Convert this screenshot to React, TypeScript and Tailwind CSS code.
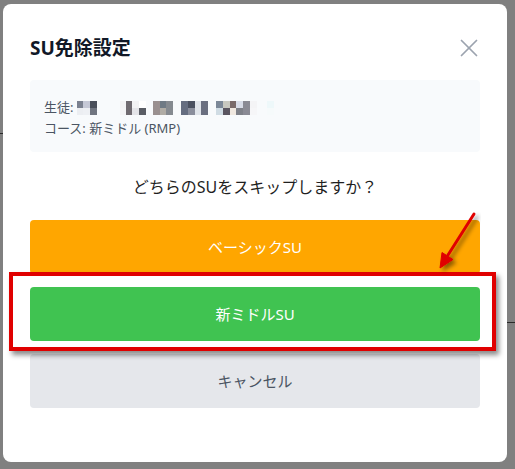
import { X } from 'lucide-react';

// pixelated (mosaic) student name: each column has a top and bottom cell
const mosaic: [number, string, string][] = [
    [84, '#7b8190', '#eceef2'],
    [90, '#c5c8d6', '#eef0f4'],
    [97, '#4a4f5a', '#707580'],
    [127, '#f2f2f4', '#f4f4f6'],
    [133, '#6f6a70', '#6f6a70'],
    [139, '#f2f2f4', '#e4e4e8'],
    [146, '#ffffff', '#5a5d65'],
    [160, '#9a9090', '#9a9090'],
    [167, '#6f7a85', '#b0aca5'],
    [173, '#858a90', '#858a90'],
    [188, '#656d80', '#656d80'],
    [195, '#4a5060', '#8a8e9c'],
    [202, '#e0e4ea', '#e0e4ea'],
    [208, '#6a6f80', '#6a6f80'],
    [223, '#7c8898', '#d0dce4'],
    [230, '#c8c8c0', '#5a5560'],
    [237, '#7a6a6a', '#f0e8e0'],
    [243, '#d8dce8', '#7e8088'],
    [250, '#8a8a94', '#8a8a94'],
    [257, '#f4f4f6', '#f6f6f8'],
    [274, '#eef8fa', '#f6fafb'],
];

const Mosaic = () => (
    <span className="relative inline-block w-[196px] h-[14px] ml-[6px]">
        {mosaic.map(([x, top, bottom]) => (
            <span key={x} className="absolute top-0 w-[7px] h-[14px] flex flex-col" style={{ left: x - 86 }}>
                <span className="h-[7px]" style={{ background: top }} />
                <span className="h-[7px]" style={{ background: bottom }} />
            </span>
        ))}
    </span>
);

export default function App() {
    return (
        <div
            className="relative w-[515px] h-[469px] bg-[#808080] overflow-hidden"
            style={{ fontFamily: '"Noto Sans", "Noto Sans CJK JP", sans-serif' }}
        >
            {/* page content behind the overlay */}
            <div className="absolute left-0 top-[133px] w-[4px] h-px bg-[#2a2a2a]" />
            <div className="absolute right-0 top-[322px] w-[9px] h-px bg-[#2a2a2a]" />

            {/* Modal */}
            <div className="relative ml-[3px] mt-[4px] w-[504px] h-[458px] bg-white rounded-lg px-[27px] pt-[30px] flex flex-col">
                <div className="h-[28px] flex items-center justify-between">
                    <h2 className="text-[19px] font-bold text-[#111827] leading-[28px]">SU免除設定</h2>
                    <X size={30} strokeWidth={1.4} className="text-[#9ca3af] -mr-[4px]" />
                </div>

                <div className="mt-[18px] h-[72px] rounded bg-[#f8fafc] px-[14px] pt-[17px] pb-[13px] text-[13px] leading-[21px] text-[#4b5563]">
                    <div className="flex items-center">
                        生徒:
                        <Mosaic />
                    </div>
                    <div>コース: 新ミドル (RMP)</div>
                </div>

                <p className="mt-[21px] text-center text-[16px] leading-[28px] text-[#1f1f1f]">
                    どちらのSUをスキップしますか？
                </p>

                <div className="mt-[19px] flex flex-col gap-[13px]">
                    <button className="h-[54px] rounded bg-[#ffa600] text-white text-[15px]">ベーシックSU</button>
                    <button className="h-[54px] rounded bg-[#40c351] text-white text-[15px]">新ミドルSU</button>
                    <button className="h-[54px] rounded bg-[#e5e7eb] text-[#4b5563] text-[15px]">キャンセル</button>
                </div>
            </div>

            {/* Annotation: red frame and arrow */}
            <div className="absolute left-[9px] top-[272px] w-[487px] h-[79px] border-4 border-[#e00000] shadow-[3px_4px_5px_rgba(0,0,0,0.45)]" />
            <svg className="absolute inset-0 pointer-events-none" width="515" height="469" viewBox="0 0 515 469">
                <defs>
                    <filter id="sh" x="-20%" y="-20%" width="140%" height="140%">
                        <feDropShadow dx="3" dy="3" stdDeviation="2" floodColor="#000" floodOpacity="0.45" />
                    </filter>
                </defs>
                <g filter="url(#sh)" fill="#e00000" stroke="#e00000">
                    <line x1="474" y1="214" x2="448" y2="255" strokeWidth="3" strokeLinecap="round" />
                    <polygon points="440,268 453,259.5 442,252.5" strokeWidth="1" strokeLinejoin="round" />
                </g>
            </svg>
        </div>
    );
}
